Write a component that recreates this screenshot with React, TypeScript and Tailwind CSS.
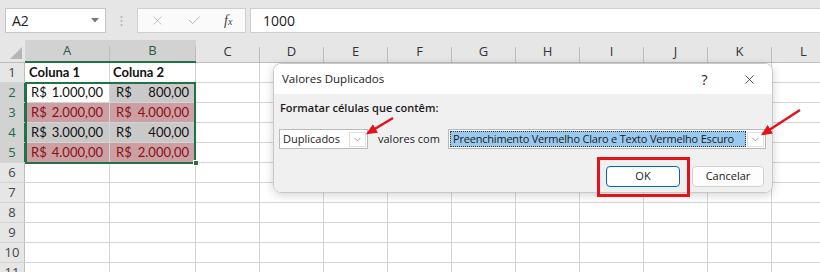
import React from 'react';
import { X, Check, ChevronDown } from 'lucide-react';

const COLS = [
  { key: 'A', w: 85, sel: true },
  { key: 'B', w: 86, sel: true },
  { key: 'C', w: 64 },
  { key: 'D', w: 64 },
  { key: 'E', w: 64 },
  { key: 'F', w: 64 },
  { key: 'G', w: 64 },
  { key: 'H', w: 64 },
  { key: 'I', w: 64 },
  { key: 'J', w: 64 },
  { key: 'K', w: 64 },
  { key: 'L', w: 64 },
];

type Cell = { cur: string; val: string; dup: boolean; active?: boolean };

// rows 2..5, columns A and B
const DATA: Cell[][] = [
  [{ cur: 'R$', val: '1.000,00', dup: false, active: true }, { cur: 'R$', val: '800,00', dup: false }],
  [{ cur: 'R$', val: '2.000,00', dup: true }, { cur: 'R$', val: '4.000,00', dup: true }],
  [{ cur: 'R$', val: '3.000,00', dup: false }, { cur: 'R$', val: '400,00', dup: false }],
  [{ cur: 'R$', val: '4.000,00', dup: true }, { cur: 'R$', val: '2.000,00', dup: true }],
];

const cellFont = { fontFamily: 'Lato, "Liberation Sans", sans-serif' };

function ValueCell({ c, w }: { c: Cell; w: number }) {
  const bg = c.active ? 'bg-white' : c.dup ? 'bg-[#cc9fa3]' : 'bg-[#c9c9c9]';
  const color = c.dup ? 'text-[#8a0f16]' : 'text-[#111]';
  return (
    <div
      className={`h-full shrink-0 border-r border-[#d4d4d4] flex items-center justify-between pl-[6px] pr-[6px] text-[13px] ${bg} ${color}`}
      style={{ width: w }}
    >
      <span>{c.cur}</span>
      <span>{c.val}</span>
    </div>
  );
}

function RowHeader({ n, sel }: { n: number; sel?: boolean }) {
  return (
    <div
      className={`w-[25px] h-full shrink-0 flex items-center justify-center text-[13px] border-r ${
        sel ? 'bg-[#d2d2d2] text-[#1e6b42] border-[#217346]' : 'bg-[#e6e6e6] text-[#444] border-[#bdbdbd]'
      }`}
      style={{ fontFamily: '"Open Sans", sans-serif' }}
    >
      {n}
    </div>
  );
}

function EmptyCells({ from }: { from: number }) {
  return (
    <>
      {COLS.slice(from).map((c) => (
        <div key={c.key} className="h-full shrink-0 border-r border-[#d4d4d4]" style={{ width: c.w }} />
      ))}
    </>
  );
}

function Sheet() {
  return (
    <div style={cellFont}>
      {/* column headers */}
      <div className="flex h-[23px] bg-[#e6e6e6]" style={{ fontFamily: '"Open Sans", sans-serif' }}>
        <div className="w-[25px] shrink-0 flex items-end justify-end border-b border-[#bdbdbd] pr-[3px] pb-[3px]">
          <svg width="12" height="12" viewBox="0 0 12 12">
            <polygon points="12,0 12,12 0,12" fill="#b5b5b5" />
          </svg>
        </div>
        {COLS.map((c) => (
          <div
            key={c.key}
            className={`shrink-0 flex items-stretch ${
              c.sel ? 'bg-[#d2d2d2] border-b-2 border-[#217346] text-[#2a5a40]' : 'border-b border-[#bdbdbd] text-[#333]'
            }`}
            style={{ width: c.w }}
          >
            <span className="flex-1 flex items-center justify-center text-[13px] pt-[1px]">{c.key}</span>
            <span className="w-px self-end h-[15px] bg-[#bdbdbd]" />
          </div>
        ))}
      </div>

      {/* row 1 */}
      <div className="flex h-[20px] border-b border-[#d4d4d4]">
        <RowHeader n={1} />
        <div className="w-[85px] shrink-0 border-r border-[#d4d4d4] flex items-center pl-[4px] text-[13px] font-bold text-[#111]">
          Coluna 1
        </div>
        <div className="w-[86px] shrink-0 border-r border-[#d4d4d4] flex items-center pl-[3px] text-[13px] font-bold text-[#111]">
          Coluna 2
        </div>
        <EmptyCells from={2} />
      </div>

      {DATA.map((row, i) => (
        <div key={i} className="flex h-[20px] border-b border-[#d4d4d4]">
          <RowHeader n={i + 2} sel />
          <ValueCell c={row[0]} w={85} />
          <ValueCell c={row[1]} w={86} />
          <EmptyCells from={2} />
        </div>
      ))}

      {[6, 7, 8, 9, 10, 11].map((n) => (
        <div key={n} className="flex h-[20px] border-b border-[#d4d4d4]">
          <RowHeader n={n} />
          <EmptyCells from={0} />
        </div>
      ))}
    </div>
  );
}

function FormulaBar() {
  return (
    <div className="h-[40px] bg-[#e6e6e6] flex items-start pt-[8px]" style={{ fontFamily: '"Open Sans", sans-serif' }}>
      <div className="ml-[5px] w-[101px] h-[25px] bg-white border border-[#c6c6c6] flex items-center pl-[6px] pr-[6px] text-[14px] text-[#222]">
        <span className="flex-1">A2</span>
        <svg width="8" height="5" viewBox="0 0 8 5">
          <polygon points="0,0 8,0 4,4.5" fill="#777" />
        </svg>
      </div>
      <div className="w-[31px] h-[25px] flex items-center justify-center">
        <svg width="3" height="12" viewBox="0 0 3 12">
          <circle cx="1.5" cy="2" r="1" fill="#b0b0b0" />
          <circle cx="1.5" cy="6" r="1" fill="#b0b0b0" />
          <circle cx="1.5" cy="10" r="1" fill="#b0b0b0" />
        </svg>
      </div>
      <div className="w-[109px] h-[25px] bg-[#fafafa] border border-[#cfcfcf] flex items-center">
        <span className="w-[40px] flex justify-center">
          <X size={15} strokeWidth={1.3} className="text-[#b5b5b5]" />
        </span>
        <span className="w-[34px] flex justify-center">
          <Check size={15} strokeWidth={1.6} className="text-[#b5b5b5]" />
        </span>
        <span
          className="w-[34px] flex justify-center italic text-[14px] text-[#444]"
          style={{ fontFamily: '"Liberation Serif", serif' }}
        >
          f<span className="text-[10px] mt-[4px]">x</span>
        </span>
      </div>
      <div className="ml-[4px] flex-1 h-[25px] bg-white border border-[#cfcfcf] border-r-0 flex items-center pl-[12px] text-[14px] text-[#222]">
        1000
      </div>
    </div>
  );
}

function Dialog() {
  return (
    <div
      className="absolute left-[273px] top-[63px] w-[500px] h-[130px] rounded-[8px] border border-[#c8c8c8] overflow-hidden shadow-[0_2px_10px_rgba(0,0,0,0.18)] flex flex-col text-[#1a1a1a]"
      style={{ fontFamily: '"Open Sans", sans-serif' }}
    >
      <div className="h-[30px] bg-white flex items-center pl-[8px] text-[11.5px]">
        <span className="flex-1">Valores Duplicados</span>
        <span className="w-[45px] text-center text-[14px]">?</span>
        <span className="w-[45px] flex justify-center">
          <X size={15} strokeWidth={1.2} className="text-[#222]" />
        </span>
      </div>
      <div className="flex-1 bg-[#f0f0f0] flex flex-col pt-[7px] text-[11px]">
        <div className="h-[14px] flex items-center pl-[6px] font-semibold">Formatar células que contêm:</div>
        <div className="mt-[14px] h-[20px] flex items-center pl-[5px]">
          <div className="w-[89px] h-full bg-white border border-[#b9b9b9] flex items-center">
            <span className="flex-1 pl-[3px]">Duplicados</span>
            <span className="w-[17px] h-[15px] mr-[1px] border border-[#e0e0e0] flex items-center justify-center">
              <ChevronDown size={11} strokeWidth={1.2} className="text-[#555]" />
            </span>
          </div>
          <span className="ml-[10px] w-[70px]">valores com</span>
          <div className="w-[318px] h-full bg-white border border-[#b9b9b9] flex items-center pl-[1px]">
            <span className="w-[296px] h-[16px] bg-[#99c9ef] border border-dotted border-[#333] flex items-center pl-[2px] whitespace-nowrap tracking-[-0.2px]">
              Preenchimento Vermelho Claro e Texto Vermelho Escuro
            </span>
            <span className="ml-auto w-[17px] h-[15px] mr-[1px] border border-[#e0e0e0] flex items-center justify-center">
              <ChevronDown size={11} strokeWidth={1.2} className="text-[#555]" />
            </span>
          </div>
        </div>
        <div className="mt-[17px] flex justify-end pr-[8px] gap-[12px]">
          <button className="w-[74px] h-[21px] bg-white border border-[#0067c0] rounded-[4px] flex items-center justify-center">
            OK
          </button>
          <button className="w-[72px] h-[21px] bg-[#fdfdfd] border border-[#d0d0d0] rounded-[4px] flex items-center justify-center">
            Cancelar
          </button>
        </div>
      </div>
    </div>
  );
}

export default function App() {
  return (
    <div className="relative w-[820px] h-[272px] overflow-hidden bg-white">
      <FormulaBar />
      <Sheet />

      {/* selection border A2:B5 + fill handle */}
      <div className="absolute left-[25px] top-[82px] w-[171px] h-[82px] border-2 border-[#217346] pointer-events-none" />
      <div className="absolute left-[193px] top-[160px] w-[6px] h-[6px] bg-[#217346] border border-white" />

      <Dialog />

      {/* annotation: red box round OK */}
      <div className="absolute left-[597px] top-[157px] w-[93px] h-[40px] border-[3px] border-[#e3121b]" />

      {/* annotation arrows */}
      <svg className="absolute left-0 top-0 pointer-events-none" width="820" height="272">
        <defs>
          <marker id="head" markerWidth="4.5" markerHeight="4" refX="3.5" refY="2" orient="auto" markerUnits="strokeWidth">
            <polygon points="0,0 4.5,2 0,4" fill="#e3121b" />
          </marker>
        </defs>
        <line x1="393" y1="118" x2="368" y2="133" stroke="#e3121b" strokeWidth="2.5" markerEnd="url(#head)" />
        <line x1="800" y1="110" x2="763" y2="134" stroke="#e3121b" strokeWidth="2.5" markerEnd="url(#head)" />
      </svg>
    </div>
  );
}
